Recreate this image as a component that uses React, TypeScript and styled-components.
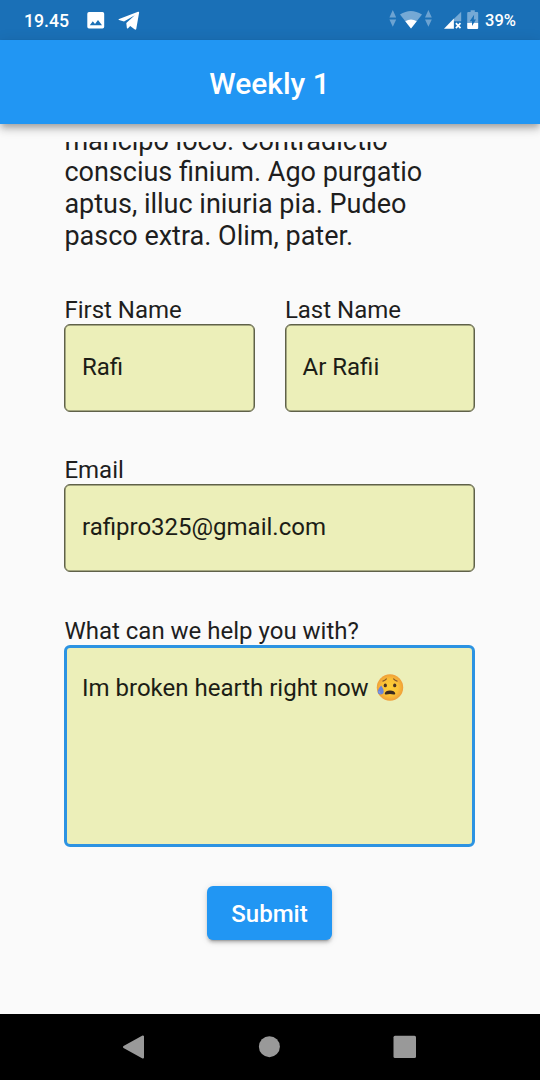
import React from 'react';
import styled, { createGlobalStyle } from 'styled-components';

const GlobalStyle = createGlobalStyle`
  * { box-sizing: border-box; }
  body { margin: 0; background: #fafafa; }
`;

const Screen = styled.div`
  display: flex;
  flex-direction: column;
  width: 540px;
  height: 1080px;
  overflow: hidden;
  background: #fafafa;
  color: #1e1e1e;
  font-family: Roboto, 'Liberation Sans', sans-serif;
`;

const StatusBar = styled.div`
  display: flex;
  align-items: center;
  flex: none;
  height: 40px;
  padding: 0 24px;
  background: #1a70b7;
  color: #fff;
`;

const StatusText = styled.span<{ $size: number; $width: number }>`
  flex: none;
  width: ${(p) => p.$width}px;
  font-size: ${(p) => p.$size}px;
  font-weight: 500;
  line-height: 20px;
  padding-top: 1px;
  white-space: nowrap;
`;

const StatusIcon = styled.svg<{ $gap?: number }>`
  flex: none;
  display: block;
  margin-left: ${(p) => p.$gap ?? 0}px;
`;

const Spacer = styled.div<{ $width?: number }>`
  flex: ${(p) => (p.$width ? `0 0 ${p.$width}px` : '1')};
`;

const AppBar = styled.header`
  display: flex;
  align-items: center;
  justify-content: center;
  flex: none;
  height: 84px;
  padding-right: 1px;
  background: #2196f3;
  color: #fff;
  position: relative;
  box-shadow: 0 3px 6px -1.5px rgba(0, 0, 0, 0.2), 0 6px 7.5px rgba(0, 0, 0, 0.14),
    0 1.5px 15px rgba(0, 0, 0, 0.12);
`;

const Title = styled.h1`
  margin: 4px 0 0;
  font-size: 30px;
  font-weight: 500;
  line-height: 36px;
`;

const Body = styled.main`
  flex: 1;
  min-height: 0;
  padding: 18px 65px 0 64px;
`;

const ScrollArea = styled.div`
  display: flex;
  flex-direction: column;
  justify-content: flex-end;
  height: 872px;
  padding-bottom: 74px;
  overflow: hidden;
`;

const Paragraph = styled.p`
  margin: 0 0 43.5px;
  padding-left: 0.4px;
  font-size: 27px;
  line-height: 31.7px;
  white-space: nowrap;
`;

const FieldRow = styled.div`
  display: flex;
  gap: 30px;
`;

const Field = styled.div<{ $gap?: number; $half?: boolean }>`
  display: flex;
  flex-direction: column;
  flex: ${(p) => (p.$half ? '1' : 'none')};
  margin-bottom: ${(p) => p.$gap ?? 44}px;
`;

const Caption = styled.span`
  padding-left: 0.4px;
  font-size: 24px;
  line-height: 28px;
`;

const Input = styled.div<{ $tall?: boolean }>`
  display: flex;
  align-items: ${(p) => (p.$tall ? 'flex-start' : 'center')};
  height: ${(p) => (p.$tall ? 202 : 88)}px;
  padding: ${(p) => (p.$tall ? '26px 15px' : '0 17px 2px')};
  border: ${(p) => (p.$tall ? '3px solid #2c93e2' : '1px solid #5f6149')};
  box-shadow: ${(p) => (p.$tall ? 'none' : 'inset 0 0 0 0.5px #5f6149')};
  border-radius: 6px;
  background: #ecefb9;
  color: #1c1d16;
  font-size: 24px;
  line-height: 28px;
  white-space: nowrap;
`;

const Emoji = styled.svg`
  flex: none;
  margin-left: 7px;
`;

const Submit = styled.button`
  align-self: center;
  flex: none;
  width: 125px;
  height: 54px;
  padding: 1px 0 0;
  border: 0;
  border-radius: 6px;
  background: #2196f3;
  color: #fff;
  font: 500 24px/28px Roboto, 'Liberation Sans', sans-serif;
  box-shadow: 0 4px 1.5px -3px rgba(0, 0, 0, 0.2), 0 3px 3px rgba(0, 0, 0, 0.14),
    0 1.5px 7px rgba(0, 0, 0, 0.12);
`;

const NavBar = styled.nav`
  display: flex;
  align-items: center;
  justify-content: space-between;
  flex: none;
  height: 66px;
  padding: 0 123px 0 122px;
  background: #000;
`;

const ImageIcon = () => (
  <StatusIcon width="18" height="18" viewBox="0 0 18 18">
    <path
      fill="#fff"
      fillRule="evenodd"
      d="M2 1H15.5A1.7 1.7 0 0 1 17.2 2.7V15.8A1.7 1.7 0 0 1 15.5 17.5H2A1.7 1.7 0 0 1 .3 15.8V2.7A1.7 1.7 0 0 1 2 1ZM2.8 14.3H15L11 9L8 12.9L5.8 10.3Z"
    />
  </StatusIcon>
);

const TelegramIcon = () => (
  <StatusIcon $gap={13} width="22" height="20" viewBox="0 0 22 20">
    <path
      fill="#fff"
      d="M20 1.8Q21.3 1.4 21.1 2.8L18.3 18.8Q17.9 20.2 16.5 19.3L12.2 16L10.1 18.2Q9 19.2 8.8 17.6L8.3 13L16.8 5.2L6 11.6L1 10.1Q-.1 9.5 1.1 8.9Z"
    />
  </StatusIcon>
);

const WifiIcon = () => (
  <StatusIcon width="44" height="20" viewBox="0 0 44 20">
    <path
      fill="#6ca3d2"
      d="M.4 7.4L3.8 0L7.2 7.4ZM.4 9.6H7.2L3.8 16.8ZM36 7.4L39.4 0L42.8 7.4ZM36 9.6H42.8L39.4 16.8Z"
    />
    <path fill="#75a9d5" d="M11 4.6Q21.8-2.8 33 4.6L22 18.4Z" />
    <path fill="#fff" d="M16.3 11.3Q22 7.6 27.7 11.3L22 18.4Z" />
  </StatusIcon>
);

const SignalIcon = () => (
  <StatusIcon $gap={11} width="18" height="18" viewBox="0 0 18 18">
    <path fill="#75a9d5" d="M17.2.8V10.2H9.5V8.2Z" />
    <path fill="#fff" d="M0 17.7L9.9 7.6V17.7Z" />
    <path d="M11.9 12.2L16.5 17.2M16.5 12.2L11.9 17.2" stroke="#fff" strokeWidth="1.7" />
  </StatusIcon>
);

const BatteryIcon = () => (
  <StatusIcon $gap={5} width="12" height="20" viewBox="0 0 12 20">
    <path fill="#75a9d5" d="M3.6.2H7.8V2H10.2Q11.2 2 11.2 3V13H.2V3Q.2 2 1.2 2H3.6Z" />
    <path fill="#fff" d="M.2 13H11.2V18Q11.2 19 10.2 19H1.2Q.2 19 .2 18Z" />
    <path fill="#1a70b7" d="M7.1 4.8L2.7 11.2H5V15.9L9 9.6H6.8Z" />
  </StatusIcon>
);

const SadFace = () => (
  <Emoji width="28" height="28" viewBox="0 0 28 28" role="img" aria-label="sad but relieved face">
    <defs>
      <radialGradient id="skin" cx="50%" cy="50%" r="52%">
        <stop offset="0" stopColor="#fdce38" />
        <stop offset="0.6" stopColor="#fbc136" />
        <stop offset="1" stopColor="#ee9b3a" />
      </radialGradient>
    </defs>
    <circle cx="14" cy="13.5" r="13.2" fill="url(#skin)" />
    <path
      d="M6.9 7.1Q9 6.7 10.4 4.9M17.6 4.9Q19 6.7 21.1 7.1"
      fill="none"
      stroke="#8a5a2b"
      strokeWidth="1.2"
      strokeLinecap="round"
    />
    <ellipse cx="9.3" cy="11.4" rx="1.6" ry="1.9" fill="#4a3322" />
    <ellipse cx="18.7" cy="11.4" rx="1.6" ry="1.9" fill="#4a3322" />
    <path
      d="M8.7 19.8Q9.4 16.6 14 16.6T19.3 19.8Q19 20.9 17.8 20.4Q14 19.6 10.2 20.4Q9 20.9 8.7 19.8Z"
      fill="#3a2a20"
    />
    <path d="M5.2 11.5Q7.8 15 7.7 17.6A3 3 0 0 1 1.7 17.6Q1.7 15.4 5.2 11.5Z" fill="#6a86d6" />
    <path d="M3.1 17.2Q2.9 18.9 4.5 19.3" fill="none" stroke="#8ba6e6" strokeWidth="1" />
  </Emoji>
);

export default function App() {
  return (
    <Screen>
      <GlobalStyle />
      <StatusBar>
        <StatusText $size={17.7} $width={63}>19.45</StatusText>
        <ImageIcon />
        <TelegramIcon />
        <Spacer />
        <WifiIcon />
        <SignalIcon />
        <BatteryIcon />
        <Spacer $width={6} />
        <StatusText $size={16.5} $width={31}>39%</StatusText>
      </StatusBar>
      <AppBar>
        <Title>Weekly 1</Title>
      </AppBar>
      <Body>
        <ScrollArea>
          <Paragraph>
            mancipo loco. Contradictio
            <br />
            conscius finium. Ago purgatio
            <br />
            aptus, illuc iniuria pia. Pudeo
            <br />
            pasco extra. Olim, pater.
          </Paragraph>
          <FieldRow>
            <Field $half>
              <Caption>First Name</Caption>
              <Input>Rafi</Input>
            </Field>
            <Field $half>
              <Caption>Last Name</Caption>
              <Input>Ar Rafii</Input>
            </Field>
          </FieldRow>
          <Field $gap={45}>
            <Caption>Email</Caption>
            <Input>rafipro325@gmail.com</Input>
          </Field>
          <Field $gap={39}>
            <Caption>What can we help you with?</Caption>
            <Input $tall>
              Im broken hearth right now
              <SadFace />
            </Input>
          </Field>
          <Submit>Submit</Submit>
        </ScrollArea>
      </Body>
      <NavBar>
        <svg width="22" height="26" viewBox="0 0 22 26">
          <path d="M2 13L21 2.5V23.5Z" fill="#999" stroke="#999" strokeWidth="2" strokeLinejoin="round" />
        </svg>
        <svg width="22" height="22" viewBox="0 0 22 22">
          <circle cx="11.4" cy="10.7" r="10.5" fill="#999" />
        </svg>
        <svg width="24" height="24" viewBox="0 0 24 24">
          <rect x="0.5" y="0.7" width="22.5" height="22.3" rx="1.5" fill="#999" />
        </svg>
      </NavBar>
    </Screen>
  );
}
